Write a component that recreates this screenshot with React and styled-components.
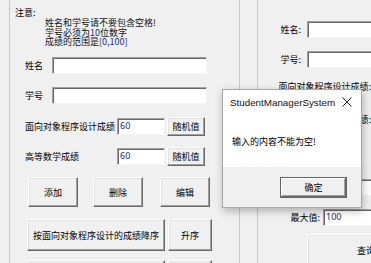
import styled, { createGlobalStyle } from 'styled-components'

const GlobalStyle = createGlobalStyle`
	html, body {
		margin: 0;
		padding: 0;
		width: 371px;
		height: 263px;
		overflow: hidden;
		background: #f0f0f0;
	}
	body {
		font-family: 'Noto Sans CJK SC', 'Noto Sans', sans-serif;
		font-size: 9px;
		color: #000;
	}
`

const Screen = styled.div`
	position: relative;
	display: flex;
	width: 371px;
	height: 263px;
	overflow: hidden;
`

const LeftPanel = styled.div`
	flex: none;
	margin-left: 9px;
	width: 229px;
	height: 300px;
	border-left: 1px solid #c9c9c9;
	border-right: 1px solid #c9c9c9;
	display: flex;
	flex-direction: column;
`

const RightPanel = styled.div`
	flex: none;
	margin-left: 17px;
	width: 300px;
	height: 300px;
	border-left: 1px solid #c9c9c9;
	display: flex;
	flex-direction: column;
`

const Notice = styled.div`
	height: 57px;
	padding-left: 5px;
	box-sizing: border-box;
`

const NoticeTitle = styled.div`
	padding-top: 8px;
	line-height: 10px;
	height: 10px;
`

const NoticeLines = styled.div`
	margin-left: 30px;
	line-height: 9.5px;
	color: #111;
`

const Num = styled.span`
	color: #1d2f7a;
`

const Row = styled.div`
	display: flex;
	align-items: center;
	height: ${p => p.$h || 17}px;
	margin-top: ${p => p.$mt || 0}px;
	padding-left: ${p => p.$pl || 0}px;
`

const Label = styled.span`
	flex: none;
	width: ${p => p.$w}px;
	text-align: ${p => (p.$right ? 'right' : 'left')};
	padding-right: ${p => p.$pr || 0}px;
	box-sizing: border-box;
	white-space: nowrap;
	line-height: 12px;
`

const Input = styled.div`
	flex: none;
	width: ${p => p.$w}px;
	height: 17px;
	box-sizing: border-box;
	background: #fff;
	border: 1px solid;
	border-color: #a0a0a0 #f4f4f4 #f4f4f4 #a0a0a0;
	box-shadow: inset 1px 1px 0 #696969;
	padding: 2px 0 0 2px;
	font-size: 9px;
	line-height: 10px;
	color: #1d2f7a;
	font-family: 'Noto Sans', sans-serif;
`

const Button = styled.div`
	flex: none;
	display: flex;
	align-items: center;
	justify-content: center;
	width: ${p => p.$w}px;
	height: ${p => p.$h || 20}px;
	margin-left: ${p => p.$ml || 0}px;
	box-sizing: border-box;
	background: #f0f0f0;
	border: 1px solid;
	border-color: #fff #696969 #696969 #fff;
	box-shadow: inset -1px -1px 0 #a0a0a0, inset 1px 1px 0 #e3e3e3;
	white-space: nowrap;
	font-size: 9px;
`

const Dialog = styled.div`
	position: absolute;
	left: 222px;
	top: 89px;
	width: 140px;
	height: 119px;
	box-sizing: border-box;
	border: 1px solid #a8a8a8;
	box-shadow: 1px 3px 8px rgba(0, 0, 0, 0.28);
	background: #fff;
	display: flex;
	flex-direction: column;
`

const TitleBar = styled.div`
	display: flex;
	align-items: center;
	justify-content: space-between;
	height: 24px;
	padding: 0 9px 0 7px;
	font-family: 'Liberation Sans', Arial, sans-serif;
	font-size: 9.8px;
	color: #111;
`

const Message = styled.div`
	flex: 1;
	padding: 21px 0 0 9px;
	font-size: 9px;
`

const Footer = styled.div`
	height: 40px;
	background: #f0f0f0;
	display: flex;
	justify-content: flex-end;
	padding: 10px 14px 0 0;
	box-sizing: border-box;
`

const OkButton = styled.div`
	width: 67px;
	height: 21px;
	box-sizing: border-box;
	display: flex;
	align-items: center;
	justify-content: center;
	background: #f0f0f0;
	border: 1px solid #646464;
	box-shadow: inset -1px -1px 0 #696969, inset 1px 1px 0 #fff, inset -2px -2px 0 #a0a0a0;
	font-size: 9px;
`

const CloseIcon = () => (
	<svg width='10' height='10' viewBox='0 0 10 10'>
		<path d='M0.5 0.5 L9.5 9.5 M9.5 0.5 L0.5 9.5' stroke='#222' strokeWidth='1' />
	</svg>
)

const App = () => {
	return (
		<Screen>
			<GlobalStyle />
			<LeftPanel>
				<Notice>
					<NoticeTitle>注意:</NoticeTitle>
					<NoticeLines>
						<div>姓名和学号请不要包含空格!</div>
						<div>学号必须为<Num>10</Num>位数字</div>
						<div>成绩的范围是<Num>[0,100]</Num></div>
					</NoticeLines>
				</Notice>
				<Row $pl={15}>
					<Label $w={27}>姓名</Label>
					<Input $w={155} />
				</Row>
				<Row $pl={15} $mt={13}>
					<Label $w={27}>学号</Label>
					<Input $w={155} />
				</Row>
				<Row $pl={15} $mt={13} $h={19}>
					<Label $w={92}>面向对象程序设计成绩</Label>
					<Input $w={48}>60</Input>
					<Button $w={38} $h={19} $ml={2}>随机值</Button>
				</Row>
				<Row $pl={15} $mt={11} $h={19}>
					<Label $w={92}>高等数学成绩</Label>
					<Input $w={48}>60</Input>
					<Button $w={38} $h={19} $ml={2}>随机值</Button>
				</Row>
				<Row $pl={18} $mt={11} $h={30}>
					<Button $w={50} $h={30}>添加</Button>
					<Button $w={50} $h={30} $ml={15}>删除</Button>
					<Button $w={50} $h={30} $ml={17}>编辑</Button>
				</Row>
				<Row $pl={17} $mt={12} $h={32}>
					<Button $w={138} $h={32}>按面向对象程序设计的成绩降序</Button>
					<Button $w={44} $h={32} $ml={3}>升序</Button>
				</Row>
				<Row $pl={17} $mt={9} $h={32}>
					<Button $w={138} $h={32}>按高等数学的成绩降序</Button>
					<Button $w={44} $h={32} $ml={3}>升序</Button>
				</Row>
			</LeftPanel>
			<RightPanel>
				<Row $mt={21}>
					<Label $w={49} $right $pr={6}>姓名:</Label>
					<Input $w={120} />
				</Row>
				<Row $mt={13}>
					<Label $w={49} $right $pr={6}>学号:</Label>
					<Input $w={120} />
				</Row>
				<Row $mt={10}>
					<Label $w={113} $right>面向对象程序设计成绩:</Label>
					<Input $w={60} />
				</Row>
				<Row $mt={16}>
					<Label $w={113} $right>高等数学成绩:</Label>
					<Input $w={60} />
				</Row>
				<Row $mt={51}>
					<Label $w={65} $right $pr={3}>最小值:</Label>
					<Input $w={60}>0</Input>
				</Row>
				<Row $mt={13}>
					<Label $w={65} $right $pr={3}>最大值:</Label>
					<Input $w={60}>100</Input>
				</Row>
				<Row $mt={8} $h={32} $pl={49}>
					<Button $w={118} $h={32}>查询</Button>
				</Row>
			</RightPanel>
			<Dialog>
				<TitleBar>
					<span>StudentManagerSystem</span>
					<CloseIcon />
				</TitleBar>
				<Message>输入的内容不能为空!</Message>
				<Footer>
					<OkButton>确定</OkButton>
				</Footer>
			</Dialog>
		</Screen>
	)
}

export default App
